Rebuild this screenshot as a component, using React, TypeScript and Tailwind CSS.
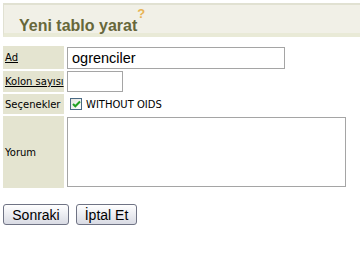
import React from "react";

const labelFont = { fontFamily: '"DejaVu Sans", Verdana, sans-serif' };

function Label({ children, link }: { children: React.ReactNode; link?: boolean }) {
  return (
    <div
      className="flex items-center bg-[#e4e4d0] pl-[2px] text-[10px] text-black"
      style={labelFont}
    >
      {link ? <span className="underline">{children}</span> : children}
    </div>
  );
}

export default function App() {
  return (
    <div className="h-[253px] w-[360px] overflow-hidden bg-white font-['Liberation_Sans',Arial,sans-serif]">
      <div className="pt-[3px] pl-[3px]">
        <div className="border-t-2 border-l border-b-4 border-t-[#e1e1d2] border-l-[#e1e1d2] border-b-[#e9ead7] bg-[#f1f0e7] h-[34px] pl-[15px] pt-[12px]">
          <h1 className="text-[16px] font-bold leading-[18px] text-[#67673a]">
            Yeni tablo yarat
            <sup className="text-[13px] font-bold text-[#e8b455] align-[7px]">?</sup>
          </h1>
        </div>
      </div>

      <div className="mt-[9px] ml-[3px] grid grid-cols-[61px_1fr] gap-x-[2px] gap-y-[2px]">
        <Label link>Ad</Label>
        <div className="h-[23px] pt-[1px] pl-px">
          <div className="flex h-[22px] w-[218px] items-center border border-[#a5a5a5] pl-[4px] pt-[2px] text-[14.5px] text-black">
            ogrenciler
          </div>
        </div>

        <Label link>Kolon sayısı</Label>
        <div className="h-[21px] pl-px">
          <div className="h-[21px] w-[56px] border border-[#a5a5a5]" />
        </div>

        <Label>Seçenekler</Label>
        <div className="flex h-[20px] items-center pl-[4px]">
          <span className="flex h-[12px] w-[12px] items-center justify-center border border-[#4a6a84] bg-gradient-to-br from-[#e4e4e0] to-white">
            <svg width="9" height="8" viewBox="0 0 9 8">
              <path d="M1 4 L3.3 6.3 L8 1.5" fill="none" stroke="#21a121" strokeWidth="2" />
            </svg>
          </span>
          <span className="ml-[4px] text-[10px] text-black" style={labelFont}>
            WITHOUT OIDS
          </span>
        </div>

        <Label>Yorum</Label>
        <div className="h-[72px] pt-[1px] pl-px">
          <div className="h-[70px] w-[279px] border border-[#a5a5a5]" />
        </div>
      </div>

      <div className="mt-[16px] ml-[3px] flex gap-[7px]">
        <button className="h-[21px] w-[66px] rounded-[3px] border border-[#6f7384] bg-gradient-to-b from-white to-[#d9dbe4] text-[14px] leading-none text-black">
          Sonraki
        </button>
        <button className="h-[21px] w-[61px] rounded-[3px] border border-[#6f7384] bg-gradient-to-b from-white to-[#d9dbe4] text-[14px] leading-none text-black">
          İptal Et
        </button>
      </div>
    </div>
  );
}
